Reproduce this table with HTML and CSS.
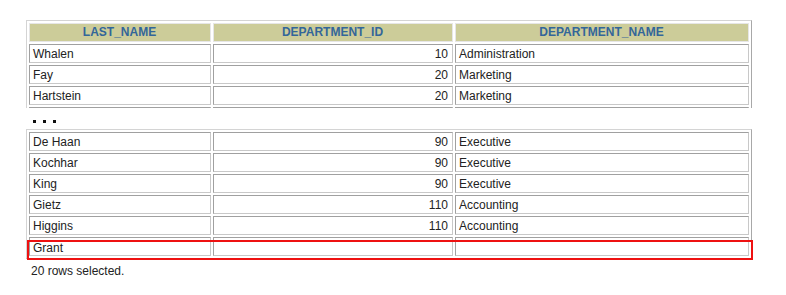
FILE: index.html
```html
<!DOCTYPE html>
<html>
<head>
<meta charset="utf-8">
<link rel="stylesheet" href="styles.css">
</head>
<body>
<div class="page">
  <div class="clip">
    <table class="grid">
      <thead>
        <tr><th class="c1">LAST_NAME</th><th class="c2">DEPARTMENT_ID</th><th class="c3">DEPARTMENT_NAME</th></tr>
      </thead>
      <tbody>
        <tr><td>Whalen</td><td class="num">10</td><td>Administration</td></tr>
        <tr><td>Fay</td><td class="num">20</td><td>Marketing</td></tr>
        <tr><td>Hartstein</td><td class="num">20</td><td>Marketing</td></tr>
        <tr><td></td><td class="num"></td><td></td></tr>
      </tbody>
    </table>
  </div>
  <div class="dots"><span></span><span></span><span></span></div>
  <div class="second">
    <table class="grid">
      <tbody>
        <tr><td class="c1">De Haan</td><td class="num c2">90</td><td class="c3">Executive</td></tr>
        <tr><td>Kochhar</td><td class="num">90</td><td>Executive</td></tr>
        <tr><td>King</td><td class="num">90</td><td>Executive</td></tr>
        <tr><td>Gietz</td><td class="num">110</td><td>Accounting</td></tr>
        <tr><td>Higgins</td><td class="num">110</td><td>Accounting</td></tr>
        <tr class="hl"><td class="last">Grant</td><td class="num"></td><td></td></tr>
      </tbody>
    </table>
    <div class="redbox"></div>
  </div>
  <div class="footer">20 rows selected.</div>
</div>
</body>
</html>
```
FILE: styles.css
```css
html, body {
  margin: 0;
  padding: 0;
  background: #ffffff;
}
.page {
  padding: 20px 0 0 26px;
  font-family: "Liberation Sans", Arial, sans-serif;
  font-size: 12px;
  color: #222222;
}
.clip {
  height: 88px;
  overflow: hidden;
}
.grid {
  border-collapse: separate;
  border-spacing: 2px;
  border: 1px solid #d4d4d4;
  border-right-color: #a8a8a8;
  border-bottom-color: #a8a8a8;
  width: 726px;
  table-layout: fixed;
}
.c1 { width: 182px; }
.c2 { width: 240px; }
.c3 { width: auto; }
.grid th,
.grid td {
  box-sizing: border-box;
  height: 19px;
  padding: 2px 4px 0 3px;
  border: 1px solid #c8c8c8;
  border-top-color: #a0a0a0;
  border-left-color: #a0a0a0;
  text-align: left;
  white-space: nowrap;
  line-height: 15px;
}
.grid th {
  background: #cccc99;
  color: #336699;
  font-weight: bold;
  text-align: center;
  border-color: #e6e6e6;
  padding-top: 0;
  line-height: 17px;
}
.grid td.num {
  text-align: right;
}
.grid td.last {
  padding-top: 3px;
  line-height: 14px;
}
.dots {
  display: flex;
  gap: 7px;
  padding: 12px 0 0 7px;
  height: 6px;
}
.dots span {
  width: 3px;
  height: 3px;
  background: #111111;
}
.second {
  position: relative;
  margin-top: 3px;
}
.redbox {
  position: absolute;
  left: 1px;
  top: 111px;
  width: 722px;
  height: 16px;
  border: 2px solid #ee1111;
}
.footer {
  padding: 5px 0 0 5px;
  color: #222222;
}
```
